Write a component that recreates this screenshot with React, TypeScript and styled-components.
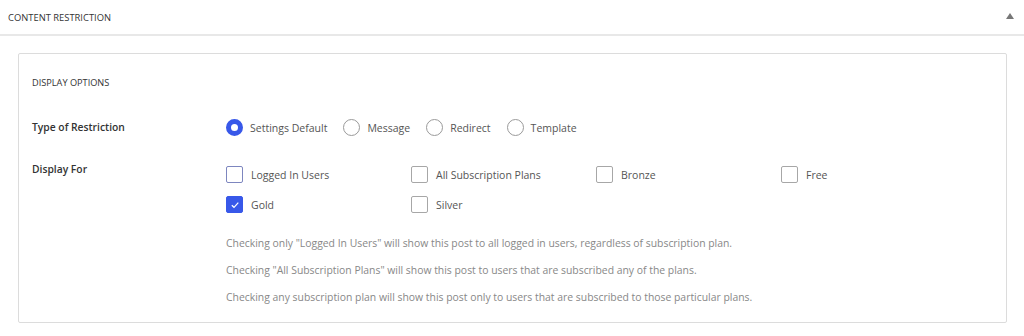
import { createGlobalStyle } from 'styled-components'
import styled from 'styled-components'

const GlobalStyle = createGlobalStyle`
    body {
        margin: 0;
        background: #ffffff;
        font-family: "Open Sans", "Noto Sans", sans-serif;
    }
`

const BLUE = '#3858e9'

// Header
const Panel = styled.div`
    width: 1024px;
    height: 336px;
    background: #fff;
    box-sizing: border-box;
`

const Header = styled.div`
    display: flex;
    align-items: center;
    justify-content: space-between;
    height: 36px;
    padding: 0 10px 0 8px;
    border-bottom: 2px solid #e8e8e8;
    box-sizing: border-box;

    & > h2 {
        margin: 0;
        font-size: 9.4px;
        font-weight: 400;
        color: #333;
    }
`

const Caret = styled.span`
    width: 0;
    height: 0;
    border-left: 4px solid transparent;
    border-right: 4px solid transparent;
    border-bottom: 6px solid #777;
    margin-top: -2px;
`

const Body = styled.div`
    padding: 17px 17px 14px 18px;
`

const Box = styled.div`
    border: 1px solid #dcdcdc;
    border-radius: 2px;
    padding: 22px 13px 20px 13px;
    height: 270px;
    box-sizing: border-box;
`

const SectionTitle = styled.h3`
    margin: 0 0 29px 0;
    font-size: 9.2px;
    line-height: 14px;
    font-weight: 400;
    color: #333;
`

const FieldRow = styled.div<{ $gap: number }>`
    display: flex;
    align-items: flex-start;
    margin-bottom: ${({ $gap }) => $gap}px;
`

const FieldLabel = styled.div`
    width: 194px;
    flex-shrink: 0;
    font-size: 10.3px;
    font-weight: 600;
    line-height: 16px;
    color: #333;
`

const Controls = styled.div`
    display: flex;
    flex-direction: column;
`

const RadioGroup = styled.div`
    display: flex;
    align-items: center;
    gap: 16px;
`

const Option = styled.label`
    display: flex;
    align-items: center;
    font-size: 10.5px;
    line-height: 16px;
    color: #555;
    cursor: pointer;
`

const RadioDot = styled.span<{ $checked?: boolean }>`
    width: 17px;
    height: 17px;
    border-radius: 50%;
    box-sizing: border-box;
    margin-right: 7px;
    border: ${({ $checked }) => ($checked ? `5px solid ${BLUE}` : '1px solid #9a9a9a')};
    background: #fff;
`

const CheckGrid = styled.div`
    display: grid;
    grid-template-columns: repeat(4, 185px);
    row-gap: 13px;
    margin-top: 5px;
`

const CheckBox = styled.span<{ $checked?: boolean; $focus?: boolean }>`
    display: flex;
    align-items: center;
    justify-content: center;
    width: 17px;
    height: 17px;
    border-radius: 2px;
    box-sizing: border-box;
    margin-right: 8px;
    background: ${({ $checked }) => ($checked ? BLUE : '#fff')};
    border: 1px solid ${({ $checked, $focus }) => ($checked ? BLUE : $focus ? '#7d86bf' : '#a7a7a7')};
`

const HelpList = styled.div`
    margin-top: 22px;
    display: flex;
    flex-direction: column;
    gap: 11px;

    & > p {
        margin: 0;
        font-size: 10.4px;
        line-height: 16px;
        color: #888;
    }
`

const plans = [
    { name: 'Logged In Users', checked: false, focus: true },
    { name: 'All Subscription Plans', checked: false },
    { name: 'Bronze', checked: false },
    { name: 'Free', checked: false },
    { name: 'Gold', checked: true },
    { name: 'Silver', checked: false },
]

const restrictions = ['Settings Default', 'Message', 'Redirect', 'Template']

export default function App() {
    return (
        <>
            <GlobalStyle />
            <Panel>
                <Header>
                    <h2>CONTENT RESTRICTION</h2>
                    <Caret />
                </Header>
                <Body>
                    <Box>
                        <SectionTitle>DISPLAY OPTIONS</SectionTitle>
                        <FieldRow $gap={25}>
                            <FieldLabel>Type of Restriction</FieldLabel>
                            <RadioGroup>
                                {restrictions.map((r, i) => (
                                    <Option key={r}>
                                        <RadioDot $checked={i === 0} />
                                        {r}
                                    </Option>
                                ))}
                            </RadioGroup>
                        </FieldRow>
                        <FieldRow $gap={0}>
                            <FieldLabel>Display For</FieldLabel>
                            <Controls>
                                <CheckGrid>
                                    {plans.map((p) => (
                                        <Option key={p.name}>
                                            <CheckBox $checked={p.checked} $focus={p.focus}>
                                                {p.checked && (
                                                    <svg width="10" height="10" viewBox="0 0 10 10">
                                                        <path d="M1.8 5.2 L4 7.3 L8.3 2.6" fill="none" stroke="#fff" strokeWidth="1.2" />
                                                    </svg>
                                                )}
                                            </CheckBox>
                                            {p.name}
                                        </Option>
                                    ))}
                                </CheckGrid>
                                <HelpList>
                                    <p>Checking only "Logged In Users" will show this post to all logged in users, regardless of subscription plan.</p>
                                    <p>Checking "All Subscription Plans" will show this post to users that are subscribed any of the plans.</p>
                                    <p>Checking any subscription plan will show this post only to users that are subscribed to those particular plans.</p>
                                </HelpList>
                            </Controls>
                        </FieldRow>
                    </Box>
                </Body>
            </Panel>
        </>
    )
}
